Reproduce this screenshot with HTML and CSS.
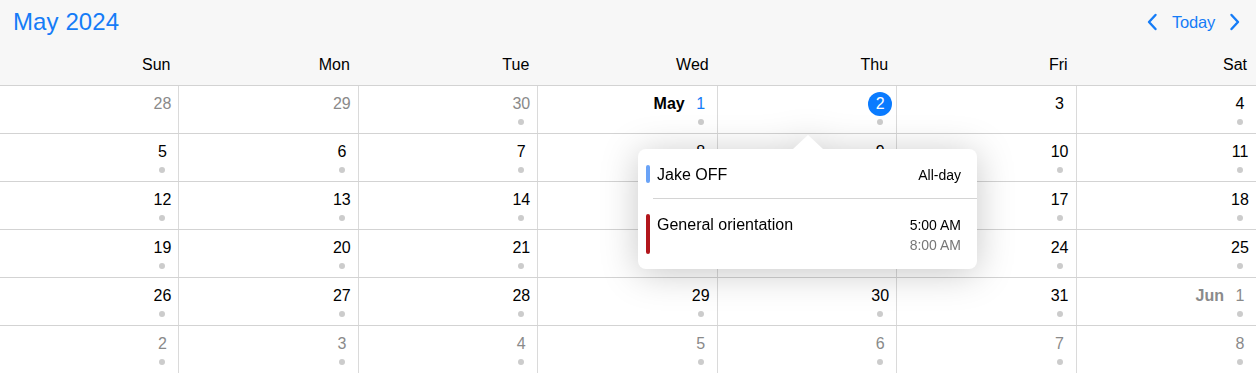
FILE: index.html
```html
<!DOCTYPE html>
<html>
<head>
<meta charset="utf-8">
<link rel="stylesheet" href="styles.css">
</head>
<body>
<div class="app">
  <header class="header">
    <div class="topbar">
      <h1 class="title">May 2024</h1>
      <nav class="nav">
        <svg class="chev" width="12" height="18" viewBox="0 0 12 18"><path d="M9.5 2 L3 9 L9.5 16" fill="none" stroke="currentColor" stroke-width="2.4" stroke-linecap="round" stroke-linejoin="round"/></svg>
        <span class="today-btn">Today</span>
        <svg class="chev" width="12" height="18" viewBox="0 0 12 18"><path d="M2.5 2 L9 9 L2.5 16" fill="none" stroke="currentColor" stroke-width="2.4" stroke-linecap="round" stroke-linejoin="round"/></svg>
      </nav>
    </div>
    <div class="weekdays">
      <div class="wd">Sun</div><div class="wd">Mon</div><div class="wd">Tue</div><div class="wd">Wed</div><div class="wd">Thu</div><div class="wd">Fri</div><div class="wd">Sat</div>
    </div>
  </header>

  <main class="grid">
    <div class="row">
      <div class="cell other"><div class="day"><span class="num">28</span><i class="dot none"></i></div></div>
      <div class="cell other"><div class="day"><span class="num">29</span><i class="dot none"></i></div></div>
      <div class="cell other"><div class="day"><span class="num">30</span><i class="dot"></i></div></div>
      <div class="cell"><span class="mon">May</span><div class="day"><span class="num blue">1</span><i class="dot"></i></div></div>
      <div class="cell"><div class="day"><span class="num sel">2</span><i class="dot"></i></div></div>
      <div class="cell"><div class="day"><span class="num">3</span><i class="dot none"></i></div></div>
      <div class="cell"><div class="day"><span class="num">4</span><i class="dot"></i></div></div>
    </div>
    <div class="row">
      <div class="cell"><div class="day"><span class="num">5</span><i class="dot"></i></div></div>
      <div class="cell"><div class="day"><span class="num">6</span><i class="dot"></i></div></div>
      <div class="cell"><div class="day"><span class="num">7</span><i class="dot"></i></div></div>
      <div class="cell"><div class="day"><span class="num">8</span><i class="dot"></i></div></div>
      <div class="cell"><div class="day"><span class="num">9</span><i class="dot"></i></div></div>
      <div class="cell"><div class="day"><span class="num">10</span><i class="dot"></i></div></div>
      <div class="cell"><div class="day"><span class="num">11</span><i class="dot"></i></div></div>
    </div>
    <div class="row">
      <div class="cell"><div class="day"><span class="num">12</span><i class="dot"></i></div></div>
      <div class="cell"><div class="day"><span class="num">13</span><i class="dot"></i></div></div>
      <div class="cell"><div class="day"><span class="num">14</span><i class="dot"></i></div></div>
      <div class="cell"><div class="day"><span class="num">15</span><i class="dot"></i></div></div>
      <div class="cell"><div class="day"><span class="num">16</span><i class="dot"></i></div></div>
      <div class="cell"><div class="day"><span class="num">17</span><i class="dot"></i></div></div>
      <div class="cell"><div class="day"><span class="num">18</span><i class="dot"></i></div></div>
    </div>
    <div class="row">
      <div class="cell"><div class="day"><span class="num">19</span><i class="dot"></i></div></div>
      <div class="cell"><div class="day"><span class="num">20</span><i class="dot"></i></div></div>
      <div class="cell"><div class="day"><span class="num">21</span><i class="dot"></i></div></div>
      <div class="cell"><div class="day"><span class="num">22</span><i class="dot"></i></div></div>
      <div class="cell"><div class="day"><span class="num">23</span><i class="dot"></i></div></div>
      <div class="cell"><div class="day"><span class="num">24</span><i class="dot"></i></div></div>
      <div class="cell"><div class="day"><span class="num">25</span><i class="dot"></i></div></div>
    </div>
    <div class="row">
      <div class="cell"><div class="day"><span class="num">26</span><i class="dot"></i></div></div>
      <div class="cell"><div class="day"><span class="num">27</span><i class="dot"></i></div></div>
      <div class="cell"><div class="day"><span class="num">28</span><i class="dot"></i></div></div>
      <div class="cell"><div class="day"><span class="num">29</span><i class="dot"></i></div></div>
      <div class="cell"><div class="day"><span class="num">30</span><i class="dot"></i></div></div>
      <div class="cell"><div class="day"><span class="num">31</span><i class="dot"></i></div></div>
      <div class="cell other"><span class="mon">Jun</span><div class="day"><span class="num">1</span><i class="dot"></i></div></div>
    </div>
    <div class="row">
      <div class="cell other"><div class="day"><span class="num">2</span><i class="dot"></i></div></div>
      <div class="cell other"><div class="day"><span class="num">3</span><i class="dot"></i></div></div>
      <div class="cell other"><div class="day"><span class="num">4</span><i class="dot"></i></div></div>
      <div class="cell other"><div class="day"><span class="num">5</span><i class="dot"></i></div></div>
      <div class="cell other"><div class="day"><span class="num">6</span><i class="dot"></i></div></div>
      <div class="cell other"><div class="day"><span class="num">7</span><i class="dot"></i></div></div>
      <div class="cell other"><div class="day"><span class="num">8</span><i class="dot"></i></div></div>
    </div>
  </main>

  <div class="popover">
    <div class="arrow"></div>
    <div class="pop-body">
      <div class="event allday">
        <span class="bar bar-blue"></span>
        <span class="ev-title">Jake OFF</span>
        <span class="ev-time">All-day</span>
      </div>
      <div class="event timed">
        <span class="bar bar-red"></span>
        <span class="ev-title">General orientation</span>
        <span class="ev-times"><span class="t-start">5:00 AM</span><span class="t-end">8:00 AM</span></span>
      </div>
    </div>
  </div>
</div>
</body>
</html>
```

FILE: styles.css
```css
* { box-sizing: border-box; }
html, body { margin: 0; padding: 0; background: #fff; }
body {
  font-family: "Liberation Sans", Arial, Helvetica, sans-serif;
  color: #000;
  width: 1256px;
  height: 373px;
  overflow: hidden;
}
.app { position: relative; width: 1256px; }

.header { background: #f7f7f7; }
.topbar {
  height: 44px;
  display: flex;
  align-items: center;
  justify-content: space-between;
  padding: 0 15px 0 13px;
}
.title {
  margin: 0;
  font-size: 24px;
  font-weight: normal;
  color: #157cf7;
  letter-spacing: 0.1px;
}
.nav {
  display: flex;
  align-items: center;
  color: #157cf7;
}
.chev { display: block; }
.today-btn {
  font-size: 16.5px;
  margin: 0 14px;
  letter-spacing: -0.2px;
}

.weekdays {
  height: 41px;
  display: grid;
  grid-template-columns: repeat(7, 1fr);
  align-items: center;
}
.wd {
  text-align: right;
  padding-right: 9px;
  font-size: 16px;
  padding-top: 1px;
}

.grid { display: flex; flex-direction: column; }
.row {
  height: 48px;
  display: grid;
  grid-template-columns: repeat(7, 1fr);
  border-top: 1px solid #d3d3d3;
}
.cell {
  display: flex;
  justify-content: flex-end;
  align-items: flex-start;
  gap: 3px;
  padding: 6px 4px 0 0;
  border-right: 1px solid #dadada;
}
.cell:last-child { border-right: none; }
.day {
  width: 24px;
  display: flex;
  flex-direction: column;
  align-items: center;
  gap: 3px;
}
.num {
  width: 24px;
  height: 24px;
  line-height: 24px;
  text-align: center;
  font-size: 16px;
  white-space: nowrap;
}
.mon {
  font-weight: bold;
  font-size: 16px;
  line-height: 24px;
  margin-right: 1px;
}
.other .num, .other .mon { color: #8a8a8a; }
.num.blue { color: #157cf7; }
.num.sel {
  background: #0a7bff;
  color: #fff;
  border-radius: 50%;
}
.dot {
  width: 6px;
  height: 6px;
  border-radius: 50%;
  background: #cccccc;
}
.dot.none { visibility: hidden; }

.popover {
  position: absolute;
  left: 638px;
  top: 135px;
  width: 339px;
  filter: drop-shadow(0 4px 18px rgba(0,0,0,0.22));
}
.arrow {
  margin-left: 155px;
  width: 30px;
  height: 14px;
  background: #fff;
  clip-path: polygon(50% 0, 100% 100%, 0 100%);
}
.pop-body {
  background: #fff;
  border-radius: 8px;
  overflow: hidden;
}
.event {
  display: flex;
  align-items: flex-start;
  padding: 0 16px 0 8px;
}
.allday {
  height: 50px;
  align-items: center;
  border-bottom: 1px solid #d4d4d4;
  margin-left: 15px;
  padding-left: 0;
  padding-top: 2px;
}
.allday .bar { margin-left: -7px; margin-top: -1px; }
.bar {
  width: 4px;
  border-radius: 2px;
  flex: none;
  margin-right: 7px;
}
.bar-blue { background: #6aa3f7; height: 18px; }
.bar-red { background: #b2161c; height: 40px; }
.ev-title {
  font-size: 16px;
  flex: 1;
}
.ev-time { font-size: 14px; }
.timed {
  height: 70px;
  padding-top: 15px;
}
.timed .ev-title { margin-top: 2px; line-height: 18px; }
.ev-times {
  display: flex;
  flex-direction: column;
  align-items: flex-end;
  font-size: 14px;
  line-height: 20px;
  padding-top: 1px;
}
.t-end { color: #777; }
```
